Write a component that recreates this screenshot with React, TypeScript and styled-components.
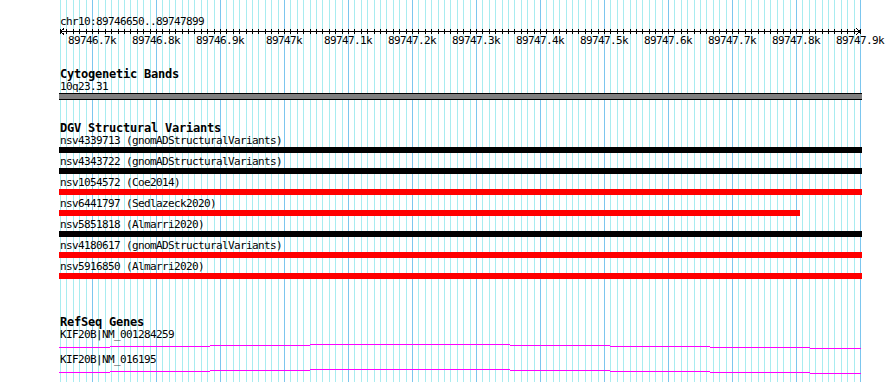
import React from 'react';
import styled, { createGlobalStyle } from 'styled-components';

const GlobalStyle = createGlobalStyle`
  html, body {
    margin: 0;
    padding: 0;
    background: #ffffff;
  }
  body {
    font-family: 'DejaVu Sans Mono', 'Liberation Mono', monospace;
    color: #000000;
  }
`;

// 1250bp over 800px
const ORIGIN = 60;
const STEP = 6.4;
const TRACK_LEFT = 59;
const TRACK_WIDTH = 803;

const gridXs = Array.from({ length: 126 }, (_, k) => Math.round(ORIGIN + STEP * k));

const rulerLabels = [
  '89746.7k', '89746.8k', '89746.9k', '89747k', '89747.1k', '89747.2k', '89747.3k',
  '89747.4k', '89747.5k', '89747.6k', '89747.7k', '89747.8k', '89747.9k',
];

type Variant = { id: string; source: string; color: string; end?: number };

const variants: Variant[] = [
  { id: 'nsv4339713', source: 'gnomADStructuralVariants', color: '#000000' },
  { id: 'nsv4343722', source: 'gnomADStructuralVariants', color: '#000000' },
  { id: 'nsv1054572', source: 'Coe2014', color: '#ff0000' },
  { id: 'nsv6441797', source: 'Sedlazeck2020', color: '#ff0000', end: 800 },
  { id: 'nsv5851818', source: 'Almarri2020', color: '#000000' },
  { id: 'nsv4180617', source: 'gnomADStructuralVariants', color: '#ff0000' },
  { id: 'nsv5916850', source: 'Almarri2020', color: '#ff0000' },
];

// intron hat: [from, to, level]
const hat: [number, number, number][] = [
  [59, 110, 3], [110, 210, 2], [210, 310, 1], [310, 510, 0],
  [510, 610, 1], [610, 710, 2], [710, 810, 3], [810, 861, 4],
];

const genes = ['KIF20B|NM_001284259', 'KIF20B|NM_016195'];

const App = () => {
  return (
    <>
      <GlobalStyle />
      <Panel>
        <Grid width={890} height={382}>
          {gridXs.map((x, k) => (
            <line
              key={k}
              x1={x + 0.5}
              x2={x + 0.5}
              y1={0}
              y2={382}
              stroke={k % 10 === 5 ? '#7cc6ee' : '#a8ecf0'}
              strokeWidth={1}
            />
          ))}
        </Grid>

        <Tracks>
          <Label>chr10:89746650..89747899</Label>
          <Ruler width={831} height={22}>
            <line x1={ORIGIN - TRACK_LEFT} x2={860 - TRACK_LEFT} y1={3.5} y2={3.5} stroke="#000" />
            {gridXs.map((x, k) => (
              <line key={k} x1={x - TRACK_LEFT + 0.5} x2={x - TRACK_LEFT + 0.5} y1={1} y2={6} stroke="#000" />
            ))}
            <polyline points="5,0.5 1.5,3.5 5,6.5" fill="none" stroke="#000" />
            <polyline points={`${860 - TRACK_LEFT - 3.5},0.5 ${860 - TRACK_LEFT},3.5 ${860 - TRACK_LEFT - 3.5},6.5`} fill="none" stroke="#000" />
            {rulerLabels.map((t, i) => (
              <RulerText key={t} x={92 + 64 * i - TRACK_LEFT} y={16} textAnchor="middle">
                {t}
              </RulerText>
            ))}
          </Ruler>

          <Section $gap={18}>
            <Title>Cytogenetic Bands</Title>
            <Label>10q23.31</Label>
            <Band />
          </Section>

          <Section $gap={22}>
            <Title>DGV Structural Variants</Title>
            {variants.map((v) => (
              <Row key={v.id}>
                <Label>
                  {v.id} ({v.source})
                </Label>
                <Bar $color={v.color} $width={(v.end ?? TRACK_LEFT + TRACK_WIDTH) - TRACK_LEFT} />
              </Row>
            ))}
          </Section>

          <Section $gap={35}>
            <Title>RefSeq Genes</Title>
            {genes.map((g) => (
              <div key={g}>
                <Label>{g}</Label>
                <GeneLine width={TRACK_WIDTH} height={12}>
                  <path
                    d={hat.map(([a, b, lv]) => `M${a - TRACK_LEFT} ${lv + 3.5}H${b - TRACK_LEFT}`).join(' ')}
                    stroke="#ff00ff"
                    strokeWidth={1}
                    fill="none"
                  />
                </GeneLine>
              </div>
            ))}
          </Section>
        </Tracks>
      </Panel>
    </>
  );
};

export default App;

const Panel = styled.div`
  position: relative;
  width: 890px;
  height: 382px;
  overflow: hidden;
  background: #ffffff;
`;

const Grid = styled.svg`
  position: absolute;
  left: 0;
  top: 0;
  shape-rendering: crispEdges;
`;

const Tracks = styled.div`
  position: relative;
  display: flex;
  flex-direction: column;
  align-items: flex-start;
  padding: 15px 0 0 ${TRACK_LEFT}px;
`;

const Label = styled.div`
  font-size: 11px;
  letter-spacing: -0.62px;
  line-height: 13px;
  height: 13px;
  padding-left: 1px;
  white-space: nowrap;
`;

const Title = styled.div`
  font-size: 12px;
  letter-spacing: -0.22px;
  font-weight: bold;
  line-height: 12px;
  height: 12px;
  padding-left: 1px;
  white-space: nowrap;
`;

const Ruler = styled.svg`
  display: block;
  overflow: visible;
  shape-rendering: crispEdges;
`;

const RulerText = styled.text`
  font-family: 'DejaVu Sans Mono', 'Liberation Mono', monospace;
  font-size: 11px;
  letter-spacing: -0.62px;
  fill: #000000;
`;

const Section = styled.div<{ $gap: number }>`
  display: flex;
  flex-direction: column;
  margin-top: ${(p) => p.$gap}px;
`;

const Band = styled.div`
  width: ${TRACK_WIDTH}px;
  height: 7px;
  box-sizing: border-box;
  background: #808080;
  border-top: 1px solid #000000;
  border-bottom: 1px solid #000000;
`;

const Row = styled.div`
  display: flex;
  flex-direction: column;
  margin-bottom: 2px;
`;

const Bar = styled.div<{ $color: string; $width: number }>`
  width: ${(p) => p.$width}px;
  height: 6px;
  background: ${(p) => p.$color};
`;

const GeneLine = styled.svg`
  display: block;
  shape-rendering: crispEdges;
`;
